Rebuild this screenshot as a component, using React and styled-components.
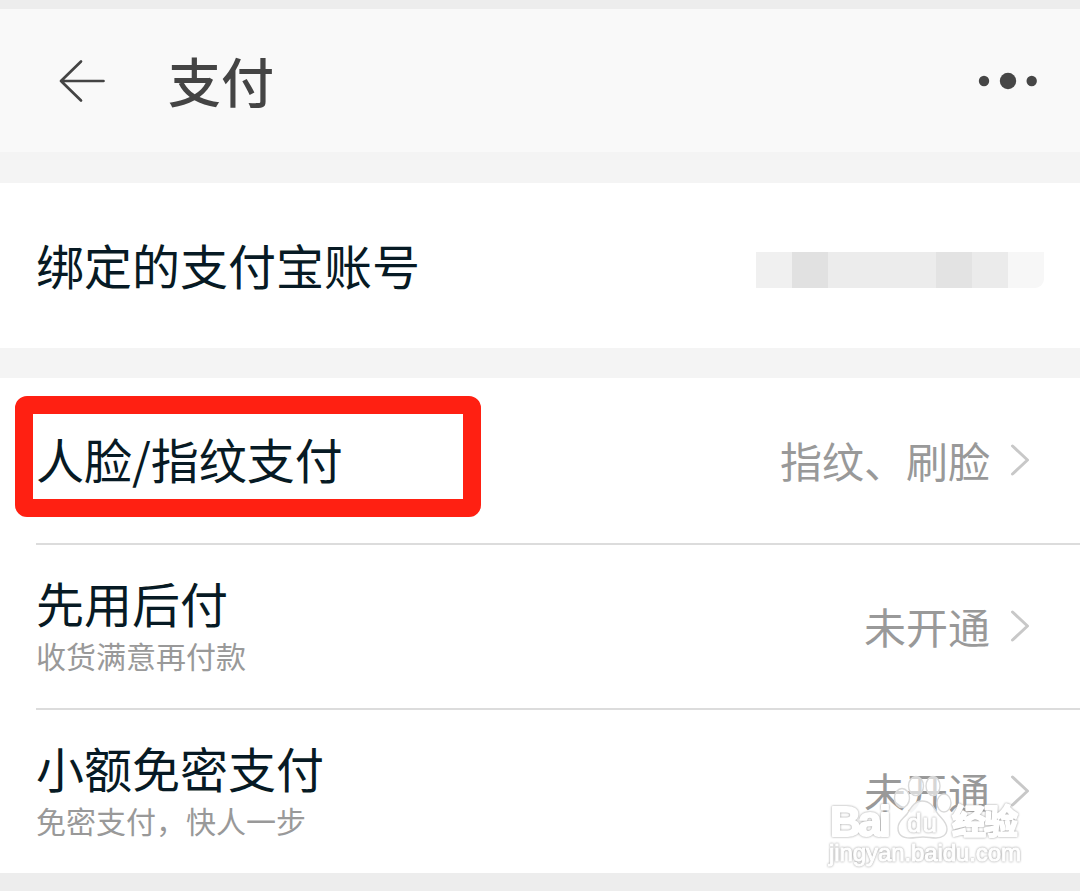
import React from 'react'
import styled, { createGlobalStyle } from 'styled-components'

const rows = [
    { id: 'biometric', label: '人脸/指纹支付', value: '指纹、刷脸', marked: true },
    { id: 'paylater', label: '先用后付', hint: '收货满意再付款', value: '未开通' },
    { id: 'nopassword', label: '小额免密支付', hint: '免密支付，快人一步', value: '未开通' },
]

const maskColors = ['#f0f0f0', '#e1e1e1', '#ececec', '#ececec', '#ececec', '#e3e3e3', '#ebebeb', '#f7f7f7']

const BackIcon = () => (
    <svg width="48" height="44" viewBox="0 0 48 44" fill="none" stroke="#444" strokeWidth="2.7" strokeLinecap="round" strokeLinejoin="round">
        <path d="M23 2.5 3 22l20 19.5M3 22h42.5" />
    </svg>
)

const MoreIcon = () => (
    <svg width="60" height="18" viewBox="0 0 60 18" fill="#464646">
        <circle cx="6" cy="9" r="5.2" />
        <circle cx="30" cy="9" r="8.2" />
        <circle cx="53.7" cy="9" r="5.2" />
    </svg>
)

const ChevronIcon = () => (
    <svg width="20" height="32" viewBox="0 0 20 32" fill="none" stroke="#c8c8c8" strokeWidth="3" strokeLinecap="round" strokeLinejoin="round">
        <path d="M2.5 2l15 14-15 14" />
    </svg>
)

const BrandMark = () => (
    <svg width="204" height="100" viewBox="0 0 204 100" fill="#fff" stroke="#d9d9d9" strokeWidth="1.4" strokeLinejoin="round">
        <g fillOpacity="0.6">
            <ellipse cx="78" cy="24" rx="7.5" ry="9.5" />
            <ellipse cx="92" cy="12" rx="7.5" ry="9.5" />
            <ellipse cx="109" cy="12" rx="7" ry="9.5" />
            <ellipse cx="120" cy="29" rx="7" ry="9" />
        </g>
        <path fillOpacity="0.9" d="M98 27c9 0 12 7 16 13 4 5 9 8 9 15 0 6-5 9-11 9-5 0-8-1-13-1s-8 1-13 1c-8 0-12-4-12-10 0-7 5-9 9-14 4-6 7-13 15-13z" />
        <MarkText x="6" y="62" textLength="61" fontSize="43" $bold>Bai</MarkText>
        <MarkText x="83" y="58" textLength="30" fontSize="26">du</MarkText>
        <MarkText x="128" y="60" textLength="66" fontSize="34" $bold>经验</MarkText>
        <MarkText x="5" y="87" textLength="192" fontSize="24">jingyan.baidu.com</MarkText>
    </svg>
)

const Row = ({ label, hint, value, marked }) => (
    <RowWrapper>
        <Texts $single={!hint}>
            {marked ? <Marked><Label>{label}</Label></Marked> : <Label>{label}</Label>}
            {hint && <Hint>{hint}</Hint>}
        </Texts>
        <ValueWrapper>
            <Value>{value}</Value>
            <ChevronIcon />
        </ValueWrapper>
    </RowWrapper>
)

const App = () => (
    <Page>
        <GlobalStyle />
        <StatusStrip />
        <Header>
            <IconButton aria-label="返回"><BackIcon /></IconButton>
            <Title>支付</Title>
            <IconButton aria-label="更多"><MoreIcon /></IconButton>
        </Header>
        <Gap $height={31} />
        <Account>
            <Label>绑定的支付宝账号</Label>
            <Mask>
                {maskColors.map((color, i) => <MaskBlock key={i} $color={color} />)}
            </Mask>
        </Account>
        <Gap $height={30} />
        <List>
            {rows.map(row => <Row key={row.id} {...row} />)}
        </List>
        <Footer />
        <Brand><BrandMark /></Brand>
    </Page>
)

export default App

const GlobalStyle = createGlobalStyle`
    body {
        margin: 0;
        background-color: white;
        font-family: "Noto Sans CJK SC", sans-serif;
    }
    * {
        box-sizing: border-box;
    }
`
const Page = styled.div`
    position: relative;
    display: flex;
    flex-direction: column;
    width: 1080px;
    height: 891px;
    overflow: hidden;
`
const StatusStrip = styled.div`
    height: 9px;
    background-color: #ededed;
`
const Header = styled.header`
    display: flex;
    align-items: center;
    height: 143px;
    padding: 0 42px 0 58px;
    background-color: #f9f9f9;
`
const IconButton = styled.button`
    display: flex;
    padding: 0;
    border: none;
    background: none;
`
const Title = styled.h1`
    flex: 1 1 auto;
    margin: 0 0 2px 62px;
    font-size: 53px;
    font-weight: 500;
    line-height: 60px;
    color: #444;
`
const Gap = styled.div`
    height: ${props => props.$height}px;
    background-color: #f4f4f4;
`
const Account = styled.section`
    display: flex;
    align-items: center;
    justify-content: space-between;
    height: 165px;
    padding: 0 36px;
    > span {
        margin-bottom: 3px;
    }
`
const Mask = styled.div`
    display: flex;
    margin-top: 9px;
    border-bottom-right-radius: 9px;
    overflow: hidden;
`
const MaskBlock = styled.div`
    width: 36px;
    height: 36px;
    background-color: ${props => props.$color};
`
const List = styled.section`
    padding-left: 36px;
`
const RowWrapper = styled.div`
    display: flex;
    align-items: center;
    justify-content: space-between;
    height: 165px;
    padding-right: 50px;
    border-bottom: 2px solid #dcdcdc;
    &:first-child {
        height: 167px;
    }
    &:last-child {
        height: 163px;
        border-bottom: none;
    }
`
const Texts = styled.div`
    display: flex;
    flex-direction: column;
    margin-bottom: ${props => props.$single ? 9 : 3}px;
`
const Label = styled.span`
    font-size: 48px;
    line-height: 60px;
    color: #071a24;
`
const Hint = styled.span`
    font-size: 30px;
    line-height: 46px;
    color: #999;
`
const Marked = styled.div`
    display: flex;
    align-items: center;
    width: 466px;
    height: 121px;
    margin-left: -21px;
    padding: 3px 0 0 3px;
    border: 18px solid #ff2012;
    border-radius: 12px;
`
const ValueWrapper = styled.div`
    display: flex;
    align-items: center;
    gap: 20px;
    margin-bottom: 1px;
`
const Value = styled.span`
    margin-bottom: 1px;
    font-size: 42px;
    line-height: 54px;
    color: #999;
`
const Footer = styled.div`
    flex: 1 1 auto;
    background-color: #ededed;
`
const Brand = styled.div`
    position: absolute;
    right: 52px;
    bottom: 17px;
    height: 100px;
`
const MarkText = styled.text`
    font-family: "Liberation Sans", "Noto Sans CJK SC", sans-serif;
    font-weight: ${props => props.$bold ? 700 : 400};
    stroke: white;
    stroke-width: ${props => props.$bold ? 2 : 1};
    filter: drop-shadow(0 0 1px #999);
`
